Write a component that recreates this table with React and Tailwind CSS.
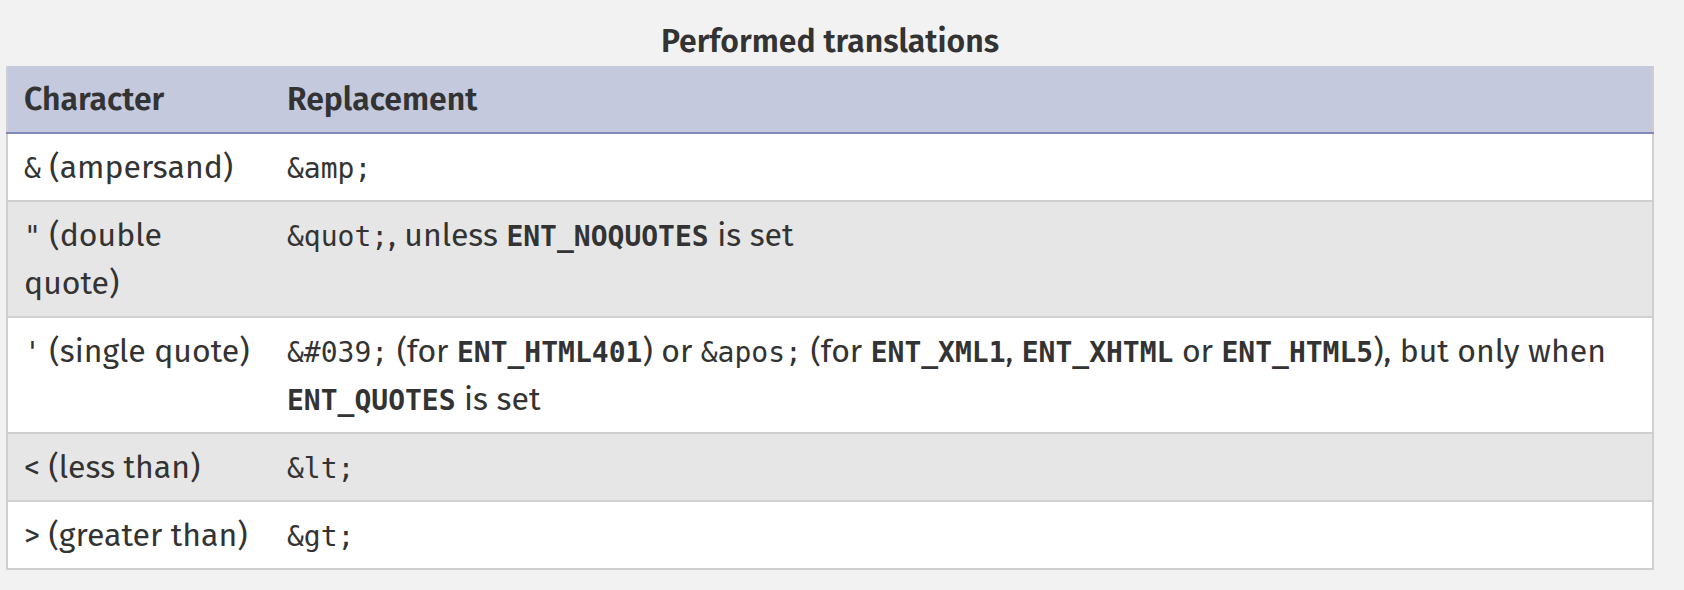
import React from "react";

const Code = ({ children }) => (
  <code className="font-['DejaVu_Sans_Mono',monospace] text-[28px] leading-[1]">{children}</code>
);
const Const = ({ children }) => (
  <strong className="font-['DejaVu_Sans_Mono',monospace] text-[28px] leading-[1] font-bold">{children}</strong>
);

const rows = [
  {
    c: (
      <>
        <Code>&amp;</Code> (ampersand)
      </>
    ),
    r: <Code>&amp;amp;</Code>,
  },
  {
    c: (
      <>
        <Code>"</Code> (double quote)
      </>
    ),
    r: (
      <>
        <Code>&amp;quot;</Code>, unless <Const>ENT_NOQUOTES</Const> is set
      </>
    ),
  },
  {
    c: (
      <>
        <Code>'</Code> (single quote)
      </>
    ),
    r: (
      <>
        <Code>&amp;#039;</Code> (for <Const>ENT_HTML401</Const>) or <Code>&amp;apos;</Code> (for{" "}
        <Const>ENT_XML1</Const>, <Const>ENT_XHTML</Const> or <Const>ENT_HTML5</Const>), but only when{" "}
        <Const>ENT_QUOTES</Const> is set
      </>
    ),
  },
  { c: "< (less than)", r: <Code>&amp;lt;</Code> },
  { c: "> (greater than)", r: <Code>&amp;gt;</Code> },
];

export default function App() {
  return (
    <div className="min-h-[590px] w-[1684px] bg-[#f2f2f2] pt-[16px] font-['Fira_Sans','Open_Sans',sans-serif] text-[32px] leading-[48px] text-[#333333]">
      <div className="ml-[6px] w-[1648px]">
        <div className="text-center font-semibold leading-[50px]">Performed translations</div>
        <table className="w-full border-collapse border-x-2 border-b-2 border-t-0 border-[#cfcfcf] table-fixed">
          <colgroup>
            <col className="w-[264px]" />
            <col />
          </colgroup>
          <thead>
            <tr className="bg-[#c4c9dd] border-b-2 border-[#8089b8]">
              <th className="pl-[16px] pr-[18px] py-[9px] text-left font-semibold">Character</th>
              <th className="pl-[16px] pr-[18px] py-[9px] text-left font-semibold">Replacement</th>
            </tr>
          </thead>
          <tbody>
            {rows.map((row, i) => (
              <tr
                key={i}
                className={
                  (i % 2 === 1 ? "bg-[#e6e6e6]" : "bg-white") + " border-b-2 border-[#cfcfcf]"
                }
              >
                <td className="pl-[16px] pr-[18px] py-[9px] align-top">{row.c}</td>
                <td className="pl-[16px] pr-[18px] py-[9px] align-top">{row.r}</td>
              </tr>
            ))}
          </tbody>
        </table>
      </div>
    </div>
  );
}
